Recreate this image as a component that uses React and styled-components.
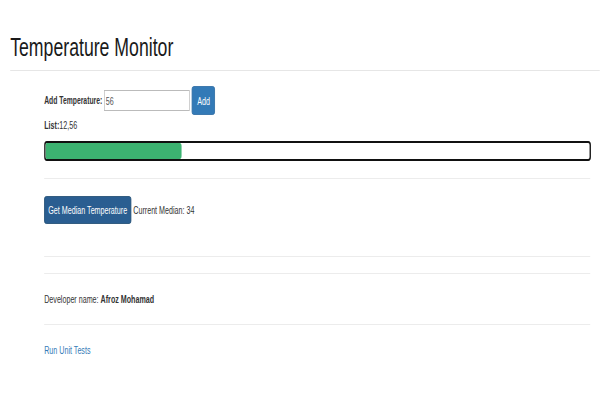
import React, { useState } from "react";
import styled, { createGlobalStyle } from "styled-components";

// the reference page is squeezed horizontally, so the whole page is drawn
// at 882px and narrowed to 600px
const GlobalStyle = createGlobalStyle`
  body {
    margin: 0;
    background: #fff;
    font-family: "Liberation Sans", Arial, sans-serif;
    color: #333;
    font-size: 10.5px;
    overflow: hidden;
  }
`;

const Stage = styled.div`
  width: 882px;
  transform: scaleX(0.68);
  transform-origin: left top;
`;

const Header = styled.div`
  margin-left: 15px;
  padding-top: 32px;
  border-bottom: 1px solid #e6e6e6;
  height: 38px;
`;

const Title = styled.h1`
  margin: 0;
  font-weight: 400;
  font-size: 26px;
  color: #1a1a1a;
  line-height: 30px;
`;

const Container = styled.div`
  padding: 15px 0 0 65px;
`;

const Row = styled.div`
  display: flex;
  align-items: center;
  gap: 3px;
`;

const Label = styled.b`
  font-size: 10px;
  white-space: nowrap;
`;

const Input = styled.input`
  width: 126px;
  height: 21px;
  box-sizing: border-box;
  border: 1px solid #bbb;
  font: inherit;
  padding: 0 1px;
  color: #555;
  outline: none;
`;

const Button = styled.button`
  background: ${(p) => (p.$dark ? "#2a5e91" : "#337ab7")};
  color: #fff;
  border: 1px solid ${(p) => (p.$dark ? "#204d74" : "#2e6da4")};
  border-radius: 3px;
  font-family: inherit;
  font-size: 10.5px;
  width: ${(p) => (p.$dark ? "128px" : "34px")};
  height: ${(p) => (p.$dark ? "28px" : "29px")};
  padding: 0;
  cursor: pointer;
`;

const Text = styled.div`
  margin-top: ${(p) => p.$mt || 0}px;
`;

const Progress = styled.div`
  margin-top: 10px;
  height: 20px;
  box-sizing: border-box;
  border: 2px solid #111;
  border-radius: 4px;
  width: 804px;
  overflow: hidden;
`;

const Bar = styled.div`
  height: 100%;
  background: #3cb371;
  border-radius: 0 3px 3px 0;
`;

const Rule = styled.hr`
  border: 0;
  border-top: 1px solid #ececec;
  margin: ${(p) => p.$m || "17px 0"};
  width: 803px;
`;

const Link = styled.a`
  color: #337ab7;
  text-decoration: none;
`;

export default function App() {
  const [value, setValue] = useState("56");
  const list = [12, 56];
  return (
    <>
      <GlobalStyle />
      <Stage>
        <Header>
          <Title>Temperature Monitor</Title>
        </Header>
        <Container>
          <Row>
            <Label>Add Temperature:</Label>
            <Input value={value} onChange={(e) => setValue(e.target.value)} />
            <Button>Add</Button>
          </Row>
          <Text $mt={4}>
            <b>List:</b>
            {list.join(",")}
          </Text>
          <Progress>
            <Bar style={{ width: "25%" }} />
          </Progress>
          <Rule />
          <Row>
            <Button $dark>Get Median Temperature</Button>
            <Text>Current Median: 34</Text>
          </Row>
          <Rule $m="32px 0 16px" />
          <Rule $m="0 0 19px" />
          <Text>
            Developer name: <b>Afroz Mohamad</b>
          </Text>
          <Rule $m="19px 0" />
          <Link href="#">Run Unit Tests</Link>
        </Container>
      </Stage>
    </>
  );
}
